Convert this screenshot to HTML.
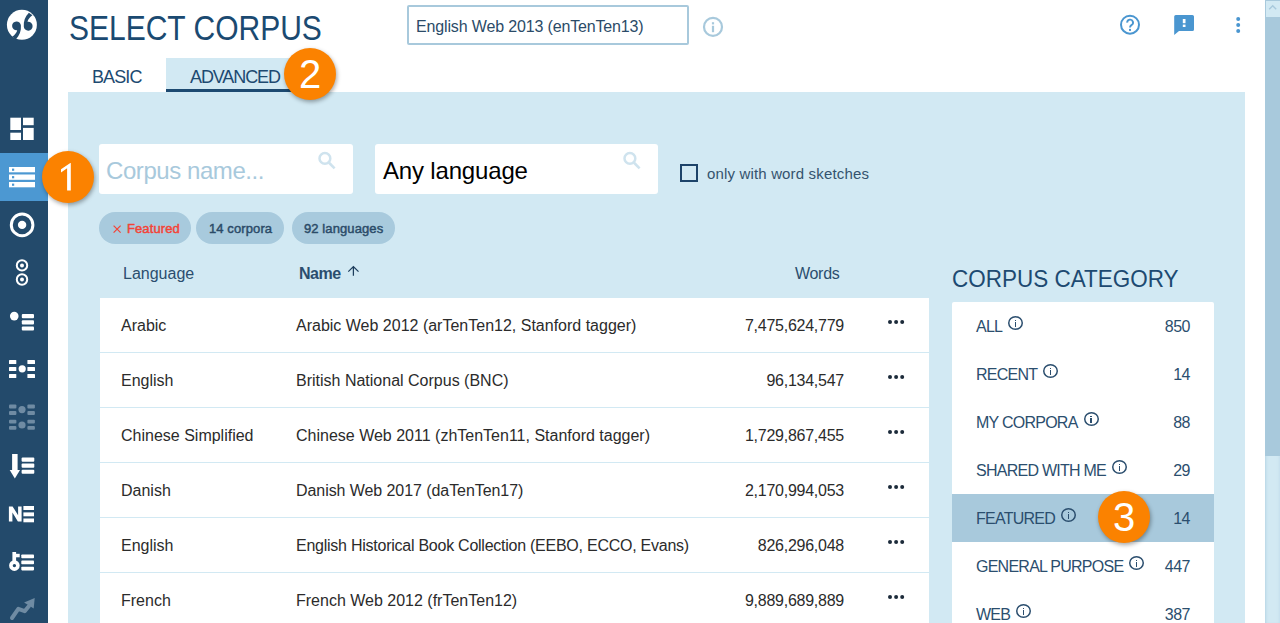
<!DOCTYPE html>
<html><head><meta charset="utf-8">
<style>
*{box-sizing:border-box;margin:0;padding:0}
html,body{width:1280px;height:623px;overflow:hidden;background:#fff;font-family:"Liberation Sans",sans-serif}
.a{position:absolute;white-space:nowrap}
svg{position:absolute;overflow:visible}
#title{left:69px;top:8px;font-size:35px;color:#1b4a71;line-height:40px;transform-origin:0 0;transform:scaleX(0.857)}
#corpsel{left:407px;top:5px;width:282px;height:40px;border:2px solid #a8c9dc;border-radius:2px}
#corpsel span{position:absolute;left:7px;top:11px;font-size:16px;color:#2b4b68;line-height:18px;letter-spacing:-0.15px}
.t{font-size:18px;color:#1d4a71;line-height:20px;letter-spacing:-0.9px}
#advbg{left:166px;top:58px;width:137px;height:34px;background:#d2e9f3;border-bottom:3px solid #1d4a71}
#panel{position:absolute;left:68px;top:92px;width:1177px;height:531px;background:#d2e9f3}
.box{position:absolute;background:#fff;border-radius:3px}
.ph{font-size:24px;line-height:28px}
.chip{position:absolute;top:212px;height:32px;border-radius:16px;background:#a8cadd}
.chip span{position:absolute;top:9px;font-size:13px;color:#2b4b68;line-height:16px;white-space:nowrap;-webkit-text-stroke:0.45px currentColor;letter-spacing:0.1px}
.th{font-size:16px;color:#2b4e6e;line-height:18px}
#table{position:absolute;left:100px;top:298px;width:829px;height:330px;background:#fff}
.row{position:absolute;left:0;width:829px;height:55px;border-bottom:1px solid #d2e9f3}
.row .c{position:absolute;top:19px;font-size:16px;color:#2b2b2b;line-height:18px;white-space:nowrap}
.row .d{position:absolute;left:788.3px;top:22px;width:4px;height:4px;border-radius:50%;background:#1c2b3a;box-shadow:6.1px 0 0 #1c2b3a,12.2px 0 0 #1c2b3a}
#cat{left:952px;top:265px;font-size:24px;color:#1d4a71;line-height:28px;transform-origin:0 0;transform:scaleX(0.937)}
#catbox{position:absolute;left:952px;top:302px;width:262px;height:330px;background:#fff;border-radius:2px}
.cr{position:absolute;left:0;width:262px;height:48px}
.cr .n{position:absolute;left:24px;top:16px;font-size:16px;color:#2b4e6e;line-height:18px;white-space:nowrap;letter-spacing:-0.75px}
.cr .n i{display:inline-block;position:relative;width:15px;height:14px;margin-left:6px;top:-2px;vertical-align:top;box-shadow:inset 0 0 0 1.5px #2b4e6e;border-radius:50%}
.cr .n i:before{content:"";position:absolute;left:6.8px;top:3.6px;width:1.3px;height:1.4px;background:#2b4e6e}
.cr .n i:after{content:"";position:absolute;left:6.8px;top:6px;width:1.3px;height:5px;background:#2b4e6e}
.cr .v{position:absolute;right:24px;top:16px;font-size:16px;color:#2b4e6e;line-height:18px;letter-spacing:-0.5px}
.callout{position:absolute;width:52px;height:52px;border-radius:50%;background:#fb8200;color:#fff;font-size:40px;line-height:52px;text-align:center;box-shadow:1px 2px 4px rgba(0,0,0,.35)}
#sb{position:absolute;left:1265px;top:0;width:15px;height:623px;background:#d2e9f3;box-shadow:inset 3px 0 3px -2px #b5d4e4,inset -3px 0 3px -2px #c3deec}
#sbup{position:absolute;left:1265px;top:0;width:15px;height:17px;background:#d2e9f3;border:1px solid #a8c9dc;border-bottom:none;border-right:none}
#thumb{position:absolute;left:1265px;top:17px;width:15px;height:439px;background:#a8c9dc}
</style></head>
<body>
<svg width="48" height="623" style="left:0;top:0">
  <rect x="0" y="0" width="48" height="623" fill="#234a6b"/>
  <rect x="0" y="153" width="48" height="48" fill="#4c98d2"/>
  <!-- logo -->
  <circle cx="21.9" cy="24.8" r="15" fill="#fff"/>
  <g fill="#234a6b">
    <path id="cm" d="M12.1 26 A4.4 4.4 0 0 1 20.9 25.6 C21.3 31 19.6 35.6 15.8 39.4 L12.3 36.8 C15 34.8 16.8 32.6 17.2 30.3 A4.4 4.4 0 0 1 12.1 26 Z"/>
    <use href="#cm" transform="rotate(180 22.35 26.05)"/>
  </g>
  <g fill="#fff">
    <!-- dashboard -->
    <rect x="10.3" y="117.7" width="10.7" height="12.3"/>
    <rect x="10.3" y="132.7" width="10.7" height="7.3"/>
    <rect x="23" y="117.7" width="10.7" height="7.5"/>
    <rect x="23" y="127.9" width="10.7" height="12.1"/>
    <!-- corpus list -->
    <rect x="9" y="167" width="26" height="5.3"/>
    <rect x="9" y="174.5" width="26" height="5.3"/>
    <rect x="9" y="182" width="26" height="5.3"/>
    <!-- concordance -->
    <circle cx="22.1" cy="224.9" r="10.8" fill="none" stroke="#fff" stroke-width="3"/>
    <circle cx="22.1" cy="224.9" r="4.2"/>
    <!-- parallel -->
    <circle cx="22" cy="265.4" r="5.2" fill="none" stroke="#fff" stroke-width="2"/>
    <circle cx="22" cy="265.4" r="2"/>
    <circle cx="22" cy="279.5" r="5.2" fill="none" stroke="#fff" stroke-width="2"/>
    <circle cx="22" cy="279.5" r="2"/>
    <!-- word sketch -->
    <circle cx="14.25" cy="316.1" r="4.3"/>
    <rect x="21.8" y="314" width="12.2" height="4.2" rx="1"/>
    <rect x="21.8" y="320.2" width="12.2" height="4.2" rx="1"/>
    <rect x="21.8" y="326.4" width="12.2" height="4.2" rx="1"/>
    <!-- thesaurus -->
    <rect x="9" y="360" width="7.3" height="4" rx=".6"/>
    <rect x="9" y="367" width="7.3" height="4" rx=".6"/>
    <rect x="9" y="374" width="7.3" height="4" rx=".6"/>
    <rect x="27.4" y="360" width="7.6" height="4" rx=".6"/>
    <rect x="27.4" y="367" width="7.6" height="4" rx=".6"/>
    <rect x="27.4" y="374" width="7.6" height="4" rx=".6"/>
    <circle cx="22.2" cy="368.8" r="3.6"/>
    <!-- word list -->
    <rect x="12.1" y="454" width="5.5" height="17"/>
    <path d="M9.7 470 L20 470 L14.85 478.6 Z"/>
    <rect x="21.6" y="457.6" width="12.7" height="4.1" rx="1"/>
    <rect x="21.6" y="463.6" width="12.7" height="4.1" rx="1"/>
    <rect x="21.6" y="469.7" width="12.7" height="4.1" rx="1"/>
    <!-- ngrams -->
    <path d="M8.9 506.4 H12.6 L18.1 515.2 V506.4 H21.6 V521.5 H17.9 L12.4 512.6 V521.5 H8.9 Z"/>
    <rect x="23.4" y="506" width="10.6" height="4"/>
    <rect x="23.4" y="512.4" width="10.6" height="3.9"/>
    <rect x="23.4" y="518.5" width="10.6" height="3.8"/>
    <!-- keywords -->
    <circle cx="14.4" cy="565.6" r="3.5" fill="none" stroke="#fff" stroke-width="3.6"/>
    <rect x="12.4" y="552" width="3.7" height="10"/>
    <rect x="15" y="553.8" width="4.7" height="3.5"/>
    <rect x="21.3" y="554.4" width="12.7" height="3.8" rx=".8"/>
    <rect x="21.3" y="560.6" width="12.7" height="3.7" rx=".8"/>
    <rect x="21.3" y="566.7" width="12.7" height="3.7" rx=".8"/>
  </g>
  <g fill="#4c98d2">
    <rect x="12" y="168.6" width="2.2" height="2.2"/>
    <rect x="12" y="176.1" width="2.2" height="2.2"/>
    <rect x="12" y="183.6" width="2.2" height="2.2"/>
  </g>
  <g fill="#6f8ba3">
    <rect x="9" y="404.5" width="7.4" height="3.9" rx="1"/>
    <rect x="9" y="411" width="7.4" height="3.9" rx="1"/>
    <rect x="9" y="419.7" width="7.4" height="3.7" rx="1"/>
    <rect x="9" y="426" width="7.4" height="3.8" rx="1"/>
    <rect x="27.4" y="404.5" width="7.5" height="3.9" rx="1"/>
    <rect x="27.4" y="411" width="7.5" height="3.9" rx="1"/>
    <rect x="27.4" y="419.7" width="7.5" height="3.7" rx="1"/>
    <rect x="27.4" y="426" width="7.5" height="3.8" rx="1"/>
    <circle cx="22" cy="409.6" r="3.6"/>
    <circle cx="22" cy="425" r="3.6"/>
    <polyline points="12,618 18.3,608.8 24.7,611.2 29,606" fill="none" stroke="#6f8ba3" stroke-width="4" stroke-linecap="round" stroke-linejoin="round"/>
    <path d="M24.1 602.5 L34.7 598 L33.7 608.5 Z"/>
  </g>
</svg>

<div class="a" id="title">SELECT CORPUS</div>
<div class="a" id="corpsel"><span>English Web 2013 (enTenTen13)</span></div>
<svg width="20" height="20" style="left:703px;top:17px"><circle cx="10" cy="9.9" r="9" fill="none" stroke="#a8c9dc" stroke-width="2.2"/><rect x="8.9" y="5.2" width="2.2" height="2.2" fill="#a8c9dc"/><rect x="8.9" y="8.8" width="2.2" height="6.4" fill="#a8c9dc"/></svg>

<!-- top right icons -->
<svg width="140" height="40" style="left:1110px;top:0">
  <circle cx="20" cy="24.7" r="9" fill="none" stroke="#4a96d0" stroke-width="2"/>
  <path d="M17.2 22.6 A2.9 2.9 0 1 1 21.4 25.1 C20.5 25.7 20 26.3 20 27.6" fill="none" stroke="#4a96d0" stroke-width="1.9"/>
  <rect x="19" y="28.9" width="2" height="2" fill="#4a96d0"/>
  <path d="M66.2 15 H82.4 A1.6 1.6 0 0 1 84 16.6 V29.4 A1.6 1.6 0 0 1 82.4 31 H69 L64.2 35 V16.6 A1.6 1.6 0 0 1 65.8 15 Z" fill="#4a96d0"/>
  <rect x="72.8" y="19" width="2.7" height="4.2" fill="#fff"/>
  <rect x="72.8" y="24.6" width="2.7" height="2.4" fill="#fff"/>
  <g fill="#4a96d0"><circle cx="128.2" cy="18.9" r="2"/><circle cx="128.2" cy="24.9" r="2"/><circle cx="128.2" cy="31" r="2"/></g>
</svg>

<div class="a" id="advbg"></div>
<div class="a t" style="left:92px;top:67px">BASIC</div>
<div class="a t" style="left:190px;top:67px;letter-spacing:-1.1px">ADVANCED</div>

<div id="panel"></div>
<div class="box" style="left:99px;top:144px;width:254px;height:50px"><span class="a ph" style="left:7px;top:13px;color:#a8c9dc;letter-spacing:-0.43px">Corpus name...</span></div>
<div class="box" style="left:375px;top:144px;width:283px;height:50px"><span class="a ph" style="left:8px;top:13px;color:#000;letter-spacing:-0.17px">Any language</span></div>
<svg width="20" height="20" style="left:318px;top:151px"><circle cx="6.9" cy="7.4" r="5.4" fill="none" stroke="#cfe3ee" stroke-width="2.5"/><path d="M10.8 11.5 L16.6 17.4" stroke="#cfe3ee" stroke-width="2.6"/></svg>
<svg width="20" height="20" style="left:623px;top:151px"><circle cx="6.9" cy="7.4" r="5.4" fill="none" stroke="#cfe3ee" stroke-width="2.5"/><path d="M10.8 11.5 L16.6 17.4" stroke="#cfe3ee" stroke-width="2.6"/></svg>
<div class="a" style="left:680px;top:164px;width:18px;height:18px;border:2px solid #1d4369"></div>
<div class="a" style="left:707px;top:165px;font-size:15px;color:#34536e;line-height:17px;letter-spacing:0.16px">only with word sketches</div>

<div class="chip" style="left:99px;width:92px"><svg width="12" height="12" style="left:13px;top:12px"><path d="M1.6 1.6 L8.6 8.6 M8.6 1.6 L1.6 8.6" stroke="#f44336" stroke-width="1.2"/></svg><span style="left:28px;color:#f44336">Featured</span></div>
<div class="chip" style="left:196px;width:88px"><span style="left:13px">14 corpora</span></div>
<div class="chip" style="left:292px;width:103px"><span style="left:12px">92 languages</span></div>

<div class="a th" style="left:123px;top:265px">Language</div>
<div class="a th" style="left:299px;top:265px;font-weight:bold;letter-spacing:-0.5px">Name</div>
<svg width="14" height="14" style="left:347px;top:266px"><path d="M6.4 1 V9.8 M1.3 5.6 L6.4 0.6 L11.5 5.6" fill="none" stroke="#1d3d5c" stroke-width="1.25"/></svg>
<div class="a th" style="left:795px;top:265px;letter-spacing:-0.3px">Words</div>

<div id="table">
  <div class="row" style="top:0"><span class="c" style="left:21px">Arabic</span><span class="c" style="left:196px">Arabic Web 2012 (arTenTen12, Stanford tagger)</span><span class="c" style="right:85px;letter-spacing:-0.25px">7,475,624,779</span><i class="d"></i></div>
  <div class="row" style="top:55px"><span class="c" style="left:21px">English</span><span class="c" style="left:196px">British National Corpus (BNC)</span><span class="c" style="right:85px;letter-spacing:-0.25px">96,134,547</span><i class="d"></i></div>
  <div class="row" style="top:110px"><span class="c" style="left:21px">Chinese Simplified</span><span class="c" style="left:196px">Chinese Web 2011 (zhTenTen11, Stanford tagger)</span><span class="c" style="right:85px;letter-spacing:-0.25px">1,729,867,455</span><i class="d"></i></div>
  <div class="row" style="top:165px"><span class="c" style="left:21px">Danish</span><span class="c" style="left:196px;letter-spacing:-0.07px">Danish Web 2017 (daTenTen17)</span><span class="c" style="right:85px;letter-spacing:-0.25px">2,170,994,053</span><i class="d"></i></div>
  <div class="row" style="top:220px"><span class="c" style="left:21px">English</span><span class="c" style="left:196px;letter-spacing:-0.25px">English Historical Book Collection (EEBO, ECCO, Evans)</span><span class="c" style="right:85px;letter-spacing:-0.25px">826,296,048</span><i class="d"></i></div>
  <div class="row" style="top:275px"><span class="c" style="left:21px">French</span><span class="c" style="left:196px">French Web 2012 (frTenTen12)</span><span class="c" style="right:85px;letter-spacing:-0.25px">9,889,689,889</span><i class="d"></i></div>
</div>

<div class="a" id="cat">CORPUS CATEGORY</div>
<div id="catbox">
  <div class="cr" style="top:0"><span class="n">ALL<i></i></span><span class="v">850</span></div>
  <div class="cr" style="top:48px"><span class="n">RECENT<i></i></span><span class="v">14</span></div>
  <div class="cr" style="top:96px"><span class="n">MY CORPORA<i></i></span><span class="v">88</span></div>
  <div class="cr" style="top:144px"><span class="n">SHARED WITH ME<i></i></span><span class="v">29</span></div>
  <div class="cr" style="top:192px;background:#a8c9dc"><span class="n">FEATURED<i></i></span><span class="v">14</span></div>
  <div class="cr" style="top:240px"><span class="n">GENERAL PURPOSE<i></i></span><span class="v">447</span></div>
  <div class="cr" style="top:288px"><span class="n">WEB<i></i></span><span class="v">387</span></div>
</div>

<div class="callout" style="left:42px;top:151px"><svg width="52" height="52" style="left:0;top:0"><path d="M28.8 11.9 V39.6 H25.1 V17.3 L19 21.6 V18.2 L28.3 11.9 Z" fill="#fff"/></svg></div>
<div class="callout" style="left:284px;top:48px">2</div>
<div class="callout" style="left:1098px;top:491px">3</div>

<div id="sb"></div>
<div id="sbup"><svg width="13" height="16" style="left:0;top:0"><path d="M3.2 8.3 L6.7 4.8 L10.2 8.3" fill="none" stroke="#a8c9dc" stroke-width="1.4"/></svg></div>
<div id="thumb"></div>
</body></html>
